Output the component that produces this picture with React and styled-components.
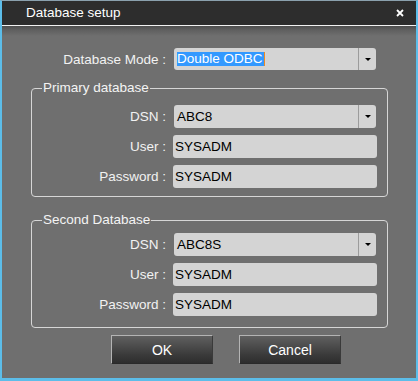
import React from "react";
import styled, { createGlobalStyle } from "styled-components";

const GlobalStyle = createGlobalStyle`
  html, body {
    margin: 0;
    padding: 0;
    background: #6f6f6f;
  }
  * {
    box-sizing: border-box;
  }
`;

const Window = styled.div`
  width: 418px;
  height: 381px;
  display: flex;
  flex-direction: column;
  border: 2px solid #5cbde9;
  border-top: 1px solid #8aa0ad;
  border-bottom: 3px solid #5cbde9;
  background: #6f6f6f;
  font-family: "Liberation Sans", Arial, sans-serif;
  font-size: 13.5px;
  overflow: hidden;
`;

const TitleBar = styled.div`
  height: 25px;
  flex-shrink: 0;
  display: flex;
  align-items: center;
  justify-content: space-between;
  padding: 0 12px 1px 24px;
  background: #2d2d2d;
  border-bottom: 1px solid #f2f2f2;
  color: #ffffff;
`;

const Close = styled.svg`
  width: 8px;
  height: 8px;
`;

const Body = styled.div`
  flex: 1;
  display: flex;
  flex-direction: column;
  padding: 22px 28px 0 29px;
  background: linear-gradient(#4d4d4d 0, #5f5f5f 4px, #6f6f6f 10px, #6f6f6f);
`;

const Row = styled.div`
  display: grid;
  grid-template-columns: 1fr 204px;
  column-gap: 7px;
  align-items: center;
  height: ${(p) => p.$height || 23}px;
  padding-right: ${(p) => p.$inset}px;
  & + & {
    margin-top: 7px;
  }
`;

const Label = styled.span`
  text-align: right;
  color: #f2f2f2;
  white-space: nowrap;
`;

const Group = styled.fieldset`
  margin: ${(p) => p.$top}px 0 0 0;
  padding: ${(p) => p.$padTop}px 0 ${(p) => p.$padBottom}px 0;
  border: 1px solid #d6d6d6;
  border-radius: 4px;
  min-width: 0;
`;

const Legend = styled.legend`
  margin-left: 10px;
  padding: 0 1px;
  line-height: 16px;
  color: #f4f4f4;
`;

const Select = styled.div`
  display: flex;
  height: 100%;
  margin: 0 1px;
  background: #d4d4d4;
  border-radius: 3px;
  color: #000;
`;

const Value = styled.div`
  flex: 1;
  display: flex;
  align-items: center;
  padding-left: 3px;
`;

const Highlight = styled.span`
  background: #3399ff;
  color: #ffffff;
  line-height: 14px;
  padding-right: 1px;
  border-right: 1px solid #f08a20;
`;

const DropButton = styled.div`
  width: 18px;
  display: flex;
  align-items: center;
  justify-content: center;
  border-left: 1px solid #9c9c9c;
  &::after {
    content: "";
    border-left: 3px solid transparent;
    border-right: 3px solid transparent;
    border-top: 3px solid #000;
  }
`;

const Input = styled.div`
  height: 100%;
  display: flex;
  align-items: center;
  padding-left: 2px;
  background: #d4d4d4;
  border-radius: 3px;
  color: #000;
`;

const Buttons = styled.div`
  display: flex;
  gap: 26px;
  margin: 7px 0 0 80px;
`;

const Button = styled.button`
  width: 102px;
  height: 29px;
  border: 1px solid #b4b4b4;
  border-bottom-color: #2a2a2a;
  border-right-color: #3a3a3a;
  background: linear-gradient(#606060, #3a3a3a 70%, #2e2e2e);
  color: #ffffff;
  font-family: "Liberation Sans", Arial, sans-serif;
  font-size: 14px;
  padding: 0;
`;

const Dropdown = ({ children }) => (
  <Select>
    <Value>{children}</Value>
    <DropButton />
  </Select>
);

const DbGroup = ({ title, dsn, top, padTop, padBottom }) => (
  <Group $top={top} $padTop={padTop} $padBottom={padBottom}>
    <Legend>{title}</Legend>
    <Row $inset={10}>
      <Label>DSN :</Label>
      <Dropdown>{dsn}</Dropdown>
    </Row>
    <Row $inset={10}>
      <Label>User :</Label>
      <Input>SYSADM</Input>
    </Row>
    <Row $inset={10}>
      <Label>Password :</Label>
      <Input>SYSADM</Input>
    </Row>
  </Group>
);

const App = () => {
  return (
    <>
      <GlobalStyle />
      <Window>
        <TitleBar>
          <span>Database setup</span>
          <Close viewBox="0 0 8 8">
            <path d="M1 1 L7 7 M7 1 L1 7" stroke="#fff" strokeWidth="1.8" />
          </Close>
        </TitleBar>
        <Body>
          <Row $inset={11} $height={22}>
            <Label>Database Mode :</Label>
            <Dropdown>
              <Highlight>Double ODBC</Highlight>
            </Dropdown>
          </Row>
          <DbGroup title="Primary database" dsn="ABC8" top={10} padTop={9} padBottom={8} />
          <DbGroup title="Second Database" dsn="ABC8S" top={15} padTop={5} padBottom={11} />
          <Buttons>
            <Button>OK</Button>
            <Button>Cancel</Button>
          </Buttons>
        </Body>
      </Window>
    </>
  );
};

export default App;
